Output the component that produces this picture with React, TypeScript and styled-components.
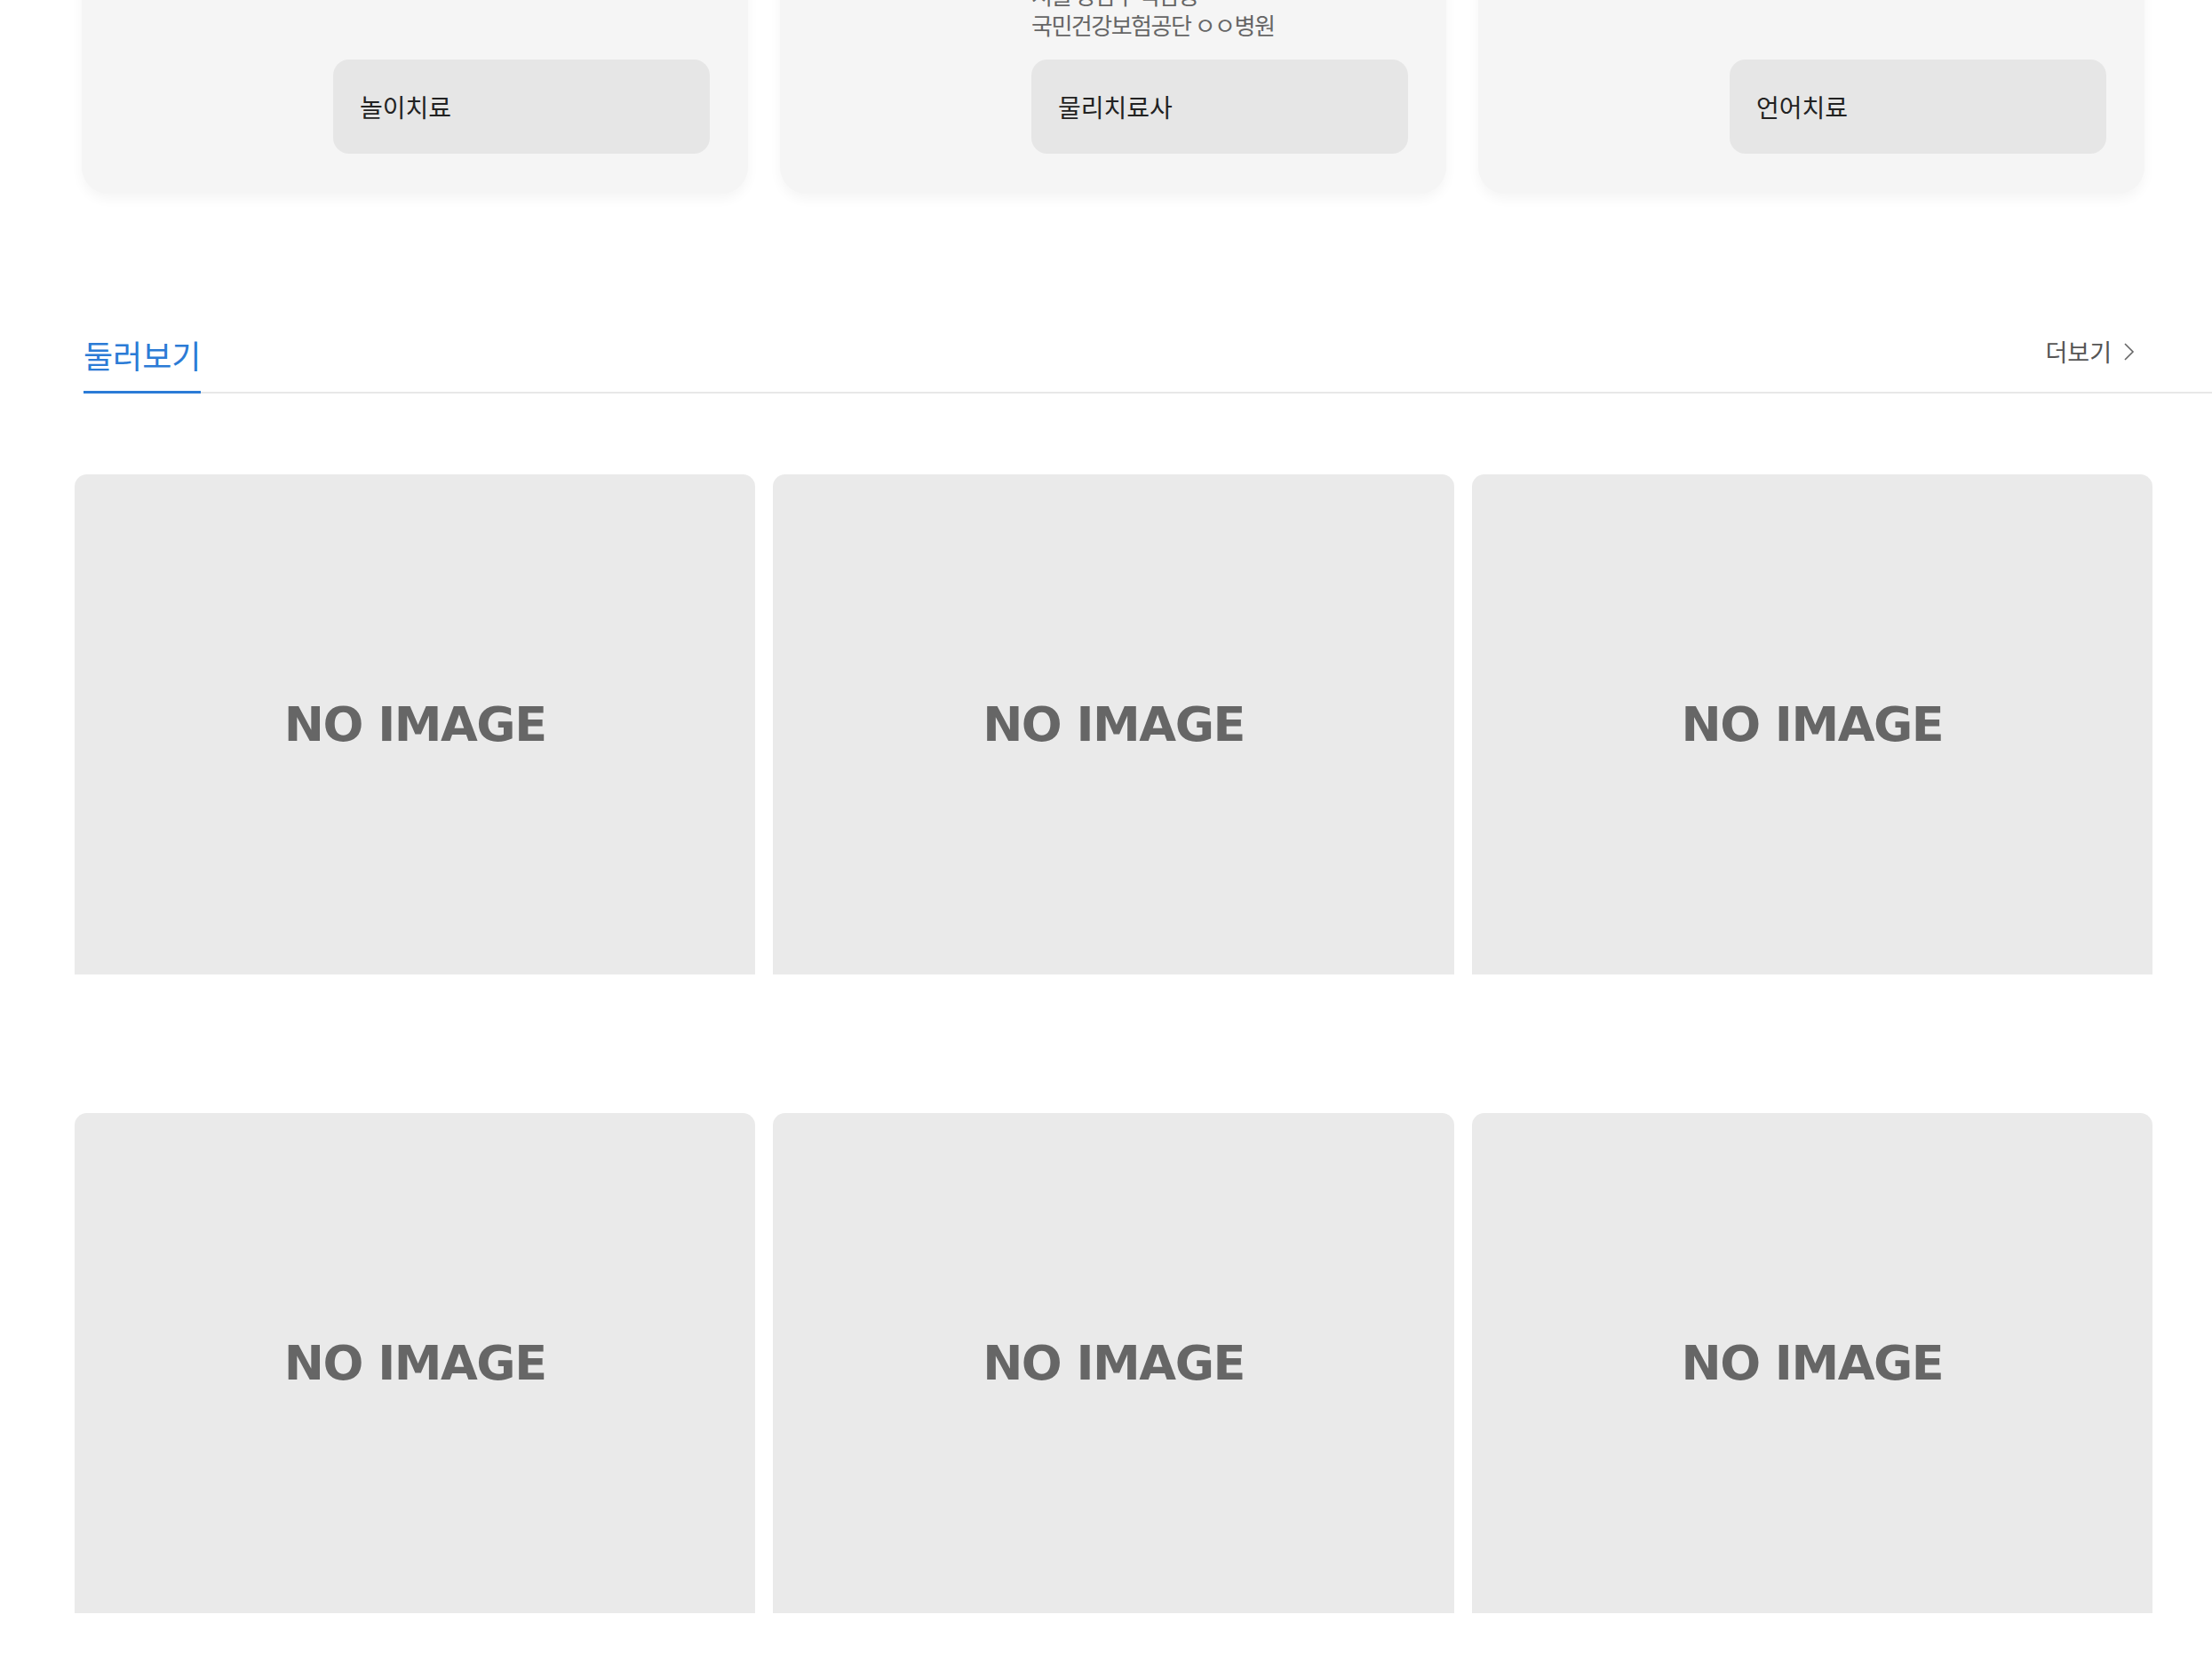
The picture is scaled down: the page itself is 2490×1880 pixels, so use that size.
import React from "react";
import styled, { createGlobalStyle } from "styled-components";

const therapists = [
  { name: "김하늘 치료사", lines: ["아동발달센터"], label: "놀이치료" },
  {
    name: "이서준 치료사",
    lines: ["재활의학과 전문", "서울 강남구 역삼동", "국민건강보험공단 ㅇㅇ병원"],
    label: "물리치료사",
  },
  { name: "박지우 치료사", lines: ["언어발달연구소"], label: "언어치료" },
];

const browseItems = [1, 2, 3, 4, 5, 6];

const MainPage = () => {
  return (
    <Page>
      <GlobalStyle />
      <Content>
        <TherapistRow>
          {therapists.map((t) => (
            <TherapistCard key={t.label}>
              <Info>
                <h4>{t.name}</h4>
                {t.lines.map((line) => (
                  <p key={line}>{line}</p>
                ))}
              </Info>
              <TagButton>{t.label}</TagButton>
            </TherapistCard>
          ))}
        </TherapistRow>

        <SectionHeader>
          <Tab>둘러보기</Tab>
          <MoreLink>
            더보기
            <svg width="15" height="22" viewBox="0 0 15 22" fill="none">
              <polyline points="3,2 12,11 3,20" stroke="#666" strokeWidth="1.6" />
            </svg>
          </MoreLink>
        </SectionHeader>

        <BrowseGrid>
          {browseItems.map((item) => (
            <Thumb key={item}>
              <span>NO IMAGE</span>
            </Thumb>
          ))}
        </BrowseGrid>
      </Content>
    </Page>
  );
};

const GlobalStyle = createGlobalStyle`
  body {
    margin: 0;
    background: #ffffff;
    font-family: "Noto Sans CJK KR", "Noto Sans", sans-serif;
  }
`;

const Page = styled.div`
  width: 2490px;
  height: 1880px;
  overflow: hidden;
  background: #fff;
`;

const Content = styled.div`
  margin-top: -151px;
  padding-left: 84px;
  width: 2339px;
`;

const TherapistRow = styled.div`
  display: grid;
  grid-template-columns: repeat(3, 750px);
  gap: 36px;
  margin: 0 9px 0 8px;
`;

const TherapistCard = styled.div`
  display: flex;
  flex-direction: column;
  align-items: flex-end;
  background: #f5f5f5;
  border-radius: 30px;
  padding: 40px 43px 45px 43px;
  box-shadow: 0 6px 14px rgba(0, 0, 0, 0.045);
`;

const Info = styled.div`
  width: 424px;
  margin-bottom: 22px;

  h4 {
    margin: 0 0 10px;
    font-size: 32px;
    line-height: 44px;
    font-weight: 700;
    color: #222;
  }

  p {
    margin: 0;
    font-size: 26px;
    line-height: 34px;
    letter-spacing: -1.5px;
    color: #666;
  }
`;

const TagButton = styled.button`
  margin-top: auto;
  width: 424px;
  height: 106px;
  border: none;
  border-radius: 18px;
  background: #e6e6e6;
  padding: 0 30px;
  text-align: left;
  font-family: "Noto Sans CJK KR", "Noto Sans", sans-serif;
  font-size: 28px;
  color: #222;
`;

const SectionHeader = styled.div`
  display: flex;
  align-items: flex-end;
  justify-content: space-between;
  margin: 159px -67px 0 10px;
  border-bottom: 2px solid #e8e8e8;
`;

const Tab = styled.h2`
  margin: 0 0 -2px;
  padding-bottom: 19px;
  border-bottom: 3px solid #2b7bd6;
  font-size: 36px;
  line-height: 44px;
  font-weight: 400;
  color: #2b7bd6;
`;

const MoreLink = styled.a`
  display: flex;
  align-items: center;
  gap: 12px;
  margin: 0 86px 29px 0;
  font-size: 27px;
  line-height: 32px;
  color: #555;
`;

const BrowseGrid = styled.div`
  display: grid;
  grid-template-columns: repeat(3, 1fr);
  column-gap: 20px;
  row-gap: 156px;
  margin-top: 91px;
`;

const Thumb = styled.div`
  display: flex;
  align-items: center;
  justify-content: center;
  height: 563px;
  background: #eaeaea;
  border-radius: 14px 14px 0 0;

  span {
    font-family: "DejaVu Sans", Verdana, sans-serif;
    font-weight: 700;
    font-size: 54px;
    letter-spacing: -1.5px;
    color: #666;
    filter: blur(0.7px);
  }
`;

export default MainPage;
